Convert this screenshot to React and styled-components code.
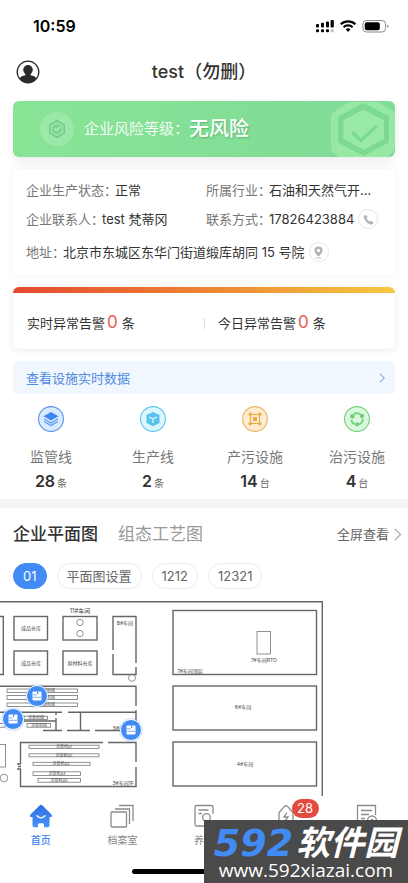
import React from 'react'
import styled, { createGlobalStyle } from 'styled-components'

const stats = [
  { name: '监管线', count: 28, unit: '条', icon: 'layers', color: '#5b8fe8', fill: '#d9ecff' },
  { name: '生产线', count: 2, unit: '条', icon: 'cube', color: '#5cc4ea', fill: '#dcf6ff' },
  { name: '产污设施', count: 14, unit: '台', icon: 'nodes', color: '#e9b45c', fill: '#fdecd0' },
  { name: '治污设施', count: 4, unit: '台', icon: 'cycle', color: '#6fcf77', fill: '#dbf8dc' }
]

const plans = ['01', '平面图设置', '1212', '12321']

const devices = [
  { id: 'a', x: 37, y: 95 },
  { id: 'b', x: 13, y: 118 },
  { id: 'c', x: 131, y: 129 }
]

const App = () => {
  return (
    <Page>
      <GlobalStyle />
      <StatusBar>
        <Clock>10:59</Clock>
        <StatusIcons />
      </StatusBar>

      <Header>
        <IconButton aria-label='我的'>
          <UserIcon />
        </IconButton>
        <Title>test（勿删）</Title>
      </Header>

      <Content>
        <Banner>
          <BannerBadge><ShieldSmall /></BannerBadge>
          <BannerLabel>企业风险等级：</BannerLabel>
          <BannerValue>无风险</BannerValue>
          <BannerArt><ShieldLarge /></BannerArt>
        </Banner>

        <InfoCard>
          <InfoItem><dt>企业生产状态：</dt><dd>正常</dd></InfoItem>
          <InfoItem><dt>所属行业：</dt><dd>石油和天然气开…</dd></InfoItem>
          <InfoItem><dt>企业联系人：</dt><dd>test 梵蒂冈</dd></InfoItem>
          <InfoItem>
            <dt>联系方式：</dt><dd>17826423884</dd>
            <RoundButton aria-label='拨打电话'><PhoneIcon /></RoundButton>
          </InfoItem>
          <InfoItem $wide>
            <dt>地址：</dt><dd>北京市东城区东华门街道缎库胡同 15 号院</dd>
            <RoundButton aria-label='查看位置'><PlaceIcon /></RoundButton>
          </InfoItem>
        </InfoCard>

        <AlertCard>
          <AlertItem>实时异常告警<b>0</b>条</AlertItem>
          <AlertItem>今日异常告警<b>0</b>条</AlertItem>
        </AlertCard>

        <DataLink href='#data'>
          查看设施实时数据
          <Chevron size={10} />
        </DataLink>
      </Content>

      <Stats>
        {stats.map(s => (
          <Stat key={s.name}>
            <StatIcon type={s.icon} color={s.color} fill={s.fill} />
            <StatName>{s.name}</StatName>
            <StatCount>{s.count}<small>{s.unit}</small></StatCount>
          </Stat>
        ))}
      </Stats>

      <PlanHead>
        <PlanTab $active>企业平面图</PlanTab>
        <PlanTab>组态工艺图</PlanTab>
        <FullLink href='#full'>全屏查看<Chevron size={13} /></FullLink>
      </PlanHead>
      <Chips>
        {plans.map((p, i) => <Chip key={p} $active={i === 0}>{p}</Chip>)}
      </Chips>
      <PlanCanvas>
        <FloorPlan />
        {devices.map(d => (
          <DevicePin key={d.id} aria-label='设备' style={{ left: d.x, top: d.y }}>
            <DeviceIcon />
          </DevicePin>
        ))}
      </PlanCanvas>

      <NavBar>
        <NavItem $active><HomeIcon />首页</NavItem>
        <NavItem><ArchiveIcon />档案室</NavItem>
        <NavItem><SearchDocIcon />养护</NavItem>
        <NavItem aria-label='告警'>
          <BoltIcon />
          <NavBadge>28</NavBadge>
        </NavItem>
        <NavItem aria-label='记录'><RecordIcon /></NavItem>
      </NavBar>
      <HomeIndicator />

      <Watermark>
        <WatermarkName><b>592</b>软件园</WatermarkName>
        <WatermarkUrl>www.592xiazai.com</WatermarkUrl>
      </Watermark>
    </Page>
  )
}

export default App

/* icons */

const StatusIcons = () => (
  <svg width='74' height='16' viewBox='0 0 74 16'>
    <g fill='#000'>
      <rect x='1' y='6' width='3' height='3.6' rx='1' />
      <rect x='6' y='4.8' width='3' height='4.8' rx='1' />
      <rect x='11' y='3.4' width='3' height='6.2' rx='1' />
      <rect x='15.6' y='2' width='3.2' height='7.6' rx='1' />
      <rect x='1' y='11.2' width='3' height='3' rx='1' />
      <rect x='6' y='11.2' width='3' height='3' rx='1' />
      <rect x='11' y='11.2' width='3' height='3' rx='1' />
      <rect x='15.8' y='11.2' width='3' height='3' rx='1' opacity='.25' />
    </g>
    <g fill='none' stroke='#000' strokeWidth='2.2'>
      <path d='M25.8 6.2a10.6 10.6 0 0 1 14.6 0' />
      <path d='M28.6 9.2a6.6 6.6 0 0 1 9 0' />
    </g>
    <path d='M30.7 11.3a3.6 3.6 0 0 1 4.8 0l-2.4 2.7z' />
    <rect x='48' y='2.5' width='22.5' height='11.5' rx='3.4' fill='none' stroke='#8b8b8b' />
    <rect x='49.8' y='4.3' width='15' height='8' rx='2' />
    <path d='M72 6.5v3.6q1.6-.6 1.6-1.8t-1.6-1.8z' fill='#999' />
  </svg>
)

const UserIcon = () => (
  <svg width='24' height='24' viewBox='0 0 24 24'>
    <circle cx='12' cy='12' r='10.8' fill='#fff' stroke='#2b2b2b' strokeWidth='1.3' />
    <circle cx='12' cy='9.8' r='4.8' fill='#2b2b2b' />
    <path d='M9.4 13h5.200v2.200q4.600.600 5.600 3.300-3 4.300-8.200 4.300t-8.200-4.300q1-2.700 5.600-3.300z' fill='#2b2b2b' />
  </svg>
)

const ShieldSmall = () => (
  <svg width='20' height='20' viewBox='0 0 20 20'>
    <path d='M10 1.8l7.2 4.1v8.2L10 18.2l-7.2-4.1V5.9z' fill='none' stroke='#6fcb87' strokeWidth='1.6' strokeLinejoin='round' />
    <path d='M10 4.6l4.8 2.7v5.4L10 15.4l-4.8-2.7V7.3z' fill='#79d590' />
    <path d='M7.4 9.6l2 2 3.6-3.5' fill='none' stroke='#b4f0bb' strokeWidth='1.4' />
  </svg>
)

const ShieldLarge = () => (
  <svg width='64' height='56' viewBox='0 0 64 56'>
    <path d='M18 1h28l16 9 4 4v31l-4 6-6 5H8l-4-3q-4-2-4-6V16q0-4 4-6z' fill='#96e8a2' />
    <path d='M32.500 2L58 15.500v26L32.500 55 7 41.500v-26z' fill='#7cd990' />
    <path d='M32.500 8.500L53 19.200v18.600L32.500 49 12.500 37.800V19.200z' fill='#98eaa4' />
    <path d='M21.500 31.500l8.500 8L45.500 25' fill='none' stroke='#7cd990' strokeWidth='3.200' />
  </svg>
)

const PhoneIcon = () => (
  <svg width='11' height='11' viewBox='0 0 24 24' fill='#b3b3b3'>
    <path d='M6 1.500L2 4.500Q.500 7 4.500 13.500T15 22.500q4 1.500 6-.500l2-3-5.500-4.500-3.500 2Q10.500 15 8 10l2-3.500z' />
  </svg>
)

const PlaceIcon = () => (
  <svg width='11' height='13' viewBox='0 0 22 26'>
    <path d='M11 1a8 8 0 0 1 8 8q0 5-8 12Q3 14 3 9a8 8 0 0 1 8-8z' fill='#b3b3b3' />
    <circle cx='11' cy='9' r='3.400' fill='#fff' />
    <path d='M5 24h12' stroke='#b3b3b3' strokeWidth='1.500' />
  </svg>
)

const Chevron = ({ size }) => (
  <svg width={size} height={size} viewBox='0 0 12 12' fill='none' stroke='currentColor' strokeWidth='1.2'>
    <path d='M3.500 .8L8.800 6l-5.300 5.200' />
  </svg>
)

const glyphs = {
  layers: (
    <g>
      <path d='M13 6l7.500 4.200-7.500 4.300-7.500-4.300z' fill='#3f86f0' />
      <path d='M6 13l7 4 7-4M6 15.600l7 4 7-4' fill='none' stroke='#5b97f2' strokeWidth='1.200' />
    </g>
  ),
  cube: (
    <g>
      <path d='M13 6l6.500 3v8L13 20.200 6.500 17V9z' fill='#56c2ee' />
      <path d='M9 11l4 1.800 4-1.800M13 12.800V17' fill='none' stroke='#dcf6ff' strokeWidth='1.300' />
    </g>
  ),
  nodes: (
    <g fill='#e9ae4c'>
      <rect x='8.500' y='8.500' width='9' height='9' fill='none' stroke='#e9ae4c' strokeWidth='1.200' />
      <rect x='11' y='11' width='4' height='4' />
      <circle cx='8.200' cy='8.200' r='1.700' />
      <circle cx='17.800' cy='8.200' r='1.700' />
      <circle cx='8.200' cy='17.800' r='1.700' />
      <circle cx='17.800' cy='17.800' r='1.700' />
    </g>
  ),
  cycle: (
    <g fill='none' stroke='#6bd176' strokeWidth='1.700'>
      <path d='M9.800 8.300a5.700 5.700 0 0 1 6.800.400M18.700 12.500a5.700 5.700 0 0 1-3.700 5.800M10.800 18.300a5.700 5.700 0 0 1-3.400-4.500' />
      <circle cx='8.400' cy='10.300' r='1.500' fill='#6bd176' />
      <circle cx='18' cy='10' r='1.300' fill='#6bd176' />
      <circle cx='13.200' cy='18.400' r='1.200' fill='#6bd176' />
    </g>
  )
}

const StatIcon = ({ type, color, fill }) => (
  <svg width='26' height='26' viewBox='0 0 26 26'>
    <circle cx='13' cy='13' r='12.400' fill={fill} stroke={color} strokeWidth='1.100' />
    {glyphs[type]}
  </svg>
)

const DeviceIcon = () => (
  <svg width='10' height='10' viewBox='0 0 10 10'>
    <rect x='.5' y='.5' width='9' height='9' rx='.800' fill='#fff' />
    <path d='M1 3.800h3.500M1 6.300h8' stroke='#4a8df0' strokeWidth='.700' />
    <path d='M5 .5h1.200v2.500H5z' fill='#4a8df0' />
  </svg>
)

const HomeIcon = () => (
  <svg width='24' height='24' viewBox='0 0 24 24'>
    <defs>
      <linearGradient id='home' x1='0' y1='0' x2='0' y2='1'>
        <stop offset='0' stopColor='#2f6fe0' />
        <stop offset='1' stopColor='#4a92f8' />
      </linearGradient>
    </defs>
    <path d='M10.800 1.200q1.200-1 2.400 0l9.600 9.600q1.200 1.700-.600 2.200h-1.700v8.500q0 1.800-1.800 1.800H15v-2.600q0-1.500-1.400-1.500h-3.200Q9 19.200 9 20.700v2.600H5.300q-1.800 0-1.800-1.800V13H1.800q-1.800-.500-.600-2.200z' fill='url(#home)' />
    <path d='M8 11.700q4 4.400 8 0' fill='none' stroke='#fff' strokeWidth='1.300' strokeLinecap='round' />
  </svg>
)

const LineIcon = styled.svg.attrs({ width: 24, height: 24, viewBox: '0 0 24 24' })`
  fill: none;
  stroke: #8c8c8c;
  stroke-width: 1.3;
`

const ArchiveIcon = () => (
  <LineIcon>
    <rect x='1' y='8' width='15.500' height='15' rx='1' />
    <path d='M5 5h14.500v15M9 1.500h14V17' />
  </LineIcon>
)

const SearchDocIcon = () => (
  <LineIcon>
    <path d='M21 10V3q0-1.500-1.500-1.500h-15Q3 1.500 3 3v17.500Q3 22 4.500 22H12M6.500 6h10M6.500 9.500H10' />
    <circle cx='14.500' cy='13.500' r='3.800' />
    <path d='M17.500 16.500l4 4.500' />
  </LineIcon>
)

const BoltIcon = () => (
  <LineIcon>
    <path d='M9 4q3-4.500 6 0l3.500 4q.5.500.5 1.500V22H5V9.500q0-1 .5-1.500z' />
    <path d='M13 8.500L10 13h4l-3 4' />
  </LineIcon>
)

const RecordIcon = () => (
  <LineIcon>
    <path d='M20.500 11V1.500h-18V22H13M6 6.500h11M6 10.500h8M6 14.500h4' />
    <circle cx='17' cy='16.500' r='4.500' />
    <circle cx='17' cy='16.500' r='1' />
  </LineIcon>
)

/* the site drawing, one unit per pixel */

const rooms = [
  [14, 15.5, 33.5, 23.500], [63, 15.5, 34, 23.500],
  [14, 50, 33.5, 23.500], [63, 50, 34, 23.500],
  [173, 9.5, 143.5, 64], [173, 85, 143.5, 44], [173, 141, 143.5, 44]
]

const racks = [
  [7, 88, 70.5, 3.5], [7, 94.500, 70.5, 4], [7, 102, 70.5, 3.5],
  [24, 115.200, 23.500, 3.300], [27, 122.500, 23.500, 3.700], [-2, 122.500, 7, 3.700],
  [29, 144.200, 70, 3.200], [29, 152.800, 70, 3], [33, 161.300, 57, 3],
  [33, 170.800, 47.5, 3.700], [38, 177.500, 42.500, 3.700],
  [257, 30.500, 13.500, 22.500], [-2, 143.500, 7.500, 22.500]
]

const labels = [
  [31, 29, '成品仓库', 5], [80, 12, '11#车间', 6], [125, 24, '8#车间', 5],
  [31, 64, '成品仓库', 5], [80, 64, '原材料仓库', 5],
  [190, 72, '7#车间顶层', 5], [264, 61, '7#车间RTO', 5],
  [243, 108, '6#车间', 5], [245, 165, '4#车间', 5],
  [121, 129, '5#车间', 5], [123, 184, '3#车间1F', 5],
  [47, 91, '涂装机组', 4], [47, 98, '涂装机组', 4], [47, 105, '涂装机组', 4],
  [36, 118, '涂装机组', 4], [39, 126, '涂装机组', 4],
  [64, 147, '涂装机01', 4], [64, 156, '涂装机02', 4], [61, 164, '涂装机03', 4],
  [57, 174, '涂装机04', 4], [59, 181, '涂装机05', 4]
]

const FloorPlan = () => (
  <PlanSvg width='408' height='195' viewBox='0 0 408 195'>
    <g className='wall'>
      <path d='M0 .8H322.300V195' />
      <path d='M0 15.5H3.300V73.500H0' />
      {rooms.map(([x, y, w, h]) => <rect key={x + '-' + y} x={x} y={y} width={w} height={h} />)}
      <path d='M113 49V15.500h23V62M136 66v7.500h-23V53' />
      <path d='M0 85.200H136V105M136 109v20.500H95M90 129.500H67M62 129.500H43M0 111.200H62M68 111.200h68M80.500 111v18.500M56 111v3M56 117v12.500M24 120h32' />
      <path d='M103 141.500H20.500V163M20.500 168v17.500H136V166M136 161v-19.500h-28' />
      <path d='M17 163h4M17 168h4M18 165.500h3' />
    </g>
    <g className='rack'>
      {racks.map(([x, y, w, h]) => <rect key={x + '-' + y} x={x} y={y} width={w} height={h} />)}
      <circle cx='80' cy='21.500' r='3.200' />
      <circle cx='80' cy='32.500' r='3.200' />
      <circle cx='132' cy='76.800' r='3.500' />
      <circle cx='4' cy='177' r='3.800' />
    </g>
    {labels.map(([x, y, t, s]) => <text key={x + '-' + y} x={x} y={y} fontSize={s}>{t}</text>)}
  </PlanSvg>
)

const PlanSvg = styled.svg`
  display: block;

  .wall {
    fill: none;
    stroke: #666;
    stroke-width: 1.4;
  }
  .rack {
    fill: none;
    stroke: #777;
    stroke-width: 0.8;
  }
  text {
    fill: #444;
    text-anchor: middle;
  }
`

const GlobalStyle = createGlobalStyle`
  * {
    box-sizing: border-box;
  }
  body {
    margin: 0;
    background: #fff;
    color: #333;
    font-family: Inter, 'Noto Sans CJK SC', sans-serif;
    font-size: 13px;
    line-height: 20px;
  }
  button {
    padding: 0;
    border: 0;
    background: none;
    color: inherit;
    font: inherit;
  }
  a {
    text-decoration: none;
  }
  svg {
    flex-shrink: 0;
  }
`

const Page = styled.div`
  position: relative;
  min-height: 100vh;
  overflow: hidden;
`

const StatusBar = styled.div`
  display: flex;
  align-items: center;
  justify-content: space-between;
  height: 52px;
  padding: 0 19px 0 33px;
`

const Clock = styled.span`
  color: #000;
  font-size: 16px;
  font-weight: 600;
`

const Header = styled.header`
  display: grid;
  grid-template-columns: 24px 1fr 24px;
  align-items: center;
  height: 40px;
  padding: 0 16px;
`

const IconButton = styled.button`
  display: flex;
`

const Title = styled.h1`
  margin: 0;
  font-size: 18px;
  font-weight: 500;
  line-height: 24px;
  text-align: center;
`

const Content = styled.main`
  display: flex;
  flex-direction: column;
  gap: 12px;
  padding: 9px 13px 0;
`

const Banner = styled.section`
  position: relative;
  display: flex;
  align-items: center;
  height: 56px;
  padding-left: 27px;
  overflow: hidden;
  border-radius: 6px;
  background: linear-gradient(90deg, #88e495, #7fdb97);
  box-shadow: 0 4px 10px rgba(0, 0, 0, 0.08);
  color: #fff;
`

const BannerBadge = styled.span`
  display: flex;
  align-items: center;
  justify-content: center;
  width: 34px;
  height: 34px;
  margin-right: 10px;
  border-radius: 50%;
  background: rgba(255, 255, 255, 0.18);
`

const BannerLabel = styled.span`
  font-size: 15px;
  opacity: 0.9;
`

const BannerValue = styled.strong`
  z-index: 1;
  font-size: 20px;
  font-weight: 500;
  text-shadow: 1px 1px 2px rgba(0, 80, 30, 0.3);
`

const BannerArt = styled.span`
  display: flex;
  margin-left: auto;
`

const InfoCard = styled.dl`
  display: grid;
  grid-template-columns: 180px 1fr;
  row-gap: 7px;
  margin: 0;
  padding: 10px 13px 12px;
  border-radius: 4px;
  box-shadow: 0 0 10px rgba(0, 0, 0, 0.06);
`

const InfoItem = styled.div`
  display: flex;
  align-items: center;
  grid-column: ${p => p.$wide ? '1 / -1' : 'auto'};
  min-width: 0;
  height: 22px;
  margin-top: ${p => p.$wide ? '4px' : '0'};

  dt {
    flex-shrink: 0;
    margin-right: -2px;
    color: #777;
  }
  dd {
    margin: 0;
    white-space: nowrap;
  }
`

const RoundButton = styled.button`
  display: flex;
  flex-shrink: 0;
  align-items: center;
  justify-content: center;
  width: 20px;
  height: 20px;
  margin-left: 4px;
  border: 1px solid #e8e8e8;
  border-radius: 50%;
`

const AlertCard = styled.section`
  display: grid;
  grid-template-columns: 1fr 1fr;
  align-items: center;
  height: 62px;
  border-radius: 6px;
  background: linear-gradient(90deg, #e4492f, #ee8433 50%, #f5c842) top / 100% 6px no-repeat;
  box-shadow: 0 2px 10px rgba(0, 0, 0, 0.07);
`

const AlertItem = styled.div`
  padding: 8px 0 0 14px;

  & + & {
    background: linear-gradient(#ddd, #ddd) left 14px / 1px 11px no-repeat;
  }
  b {
    margin: 0 4px 0 2px;
    color: #e85a5a;
    font-size: 17px;
    font-weight: 400;
  }
`

const DataLink = styled.a`
  display: flex;
  align-items: center;
  justify-content: space-between;
  height: 33px;
  padding: 0 8px 0 13px;
  border-radius: 4px;
  background: #f1f7fe;
  color: #4f8be0;
`

const Stats = styled.section`
  display: grid;
  grid-template-columns: repeat(4, 1fr);
  padding: 12px 0 4px;
  border-bottom: 9px solid #f4f4f4;
`

const Stat = styled.div`
  display: flex;
  flex-direction: column;
  align-items: center;
`

const StatName = styled.span`
  margin-top: 13px;
  color: #777;
  font-size: 14px;
  line-height: 24px;
`

const StatCount = styled.span`
  font-size: 16px;
  font-weight: 600;
  line-height: 24px;

  small {
    margin-left: 2px;
    color: #666;
    font-size: 10px;
    font-weight: 400;
  }
`

const PlanHead = styled.div`
  display: flex;
  align-items: center;
  gap: 20px;
  height: 52px;
  padding: 0 4px 0 13px;
`

const PlanTab = styled.button`
  color: ${p => p.$active ? '#333' : '#999'};
  font-size: 17px;
  font-weight: ${p => p.$active ? 500 : 400};
`

const FullLink = styled.a`
  display: flex;
  align-items: center;
  gap: 2px;
  margin-left: auto;
  color: #666;

  svg {
    color: #aaa;
  }
`

const Chips = styled.div`
  display: flex;
  gap: 10px;
  padding: 3px 13px 12px;
`

const Chip = styled.button`
  height: 26px;
  padding: 0 9px;
  border: 1px solid ${p => p.$active ? '#428bf5' : '#ececec'};
  border-radius: 13px;
  background: ${p => p.$active ? '#428bf5' : '#fff'};
  color: ${p => p.$active ? '#fff' : '#666'};
`

const PlanCanvas = styled.section`
  position: relative;
  overflow: hidden;
`

const DevicePin = styled.button`
  position: absolute;
  display: flex;
  align-items: center;
  justify-content: center;
  width: 22px;
  height: 22px;
  margin: -11px 0 0 -11px;
  border: 1px solid #fff;
  border-radius: 50%;
  background: #428bf5;
  box-shadow: 0 0 2px rgba(66, 139, 245, 0.6);
`

const NavBar = styled.nav`
  display: grid;
  grid-template-columns: repeat(5, 1fr);
  height: 73px;
  padding-top: 8px;
  background: #fff;
`

const NavItem = styled.button`
  position: relative;
  display: flex;
  flex-direction: column;
  align-items: center;
  gap: 2px;
  color: ${p => p.$active ? '#3b82f0' : '#888'};
  font-size: 10px;
  font-weight: ${p => p.$active ? 500 : 400};
`

const NavBadge = styled.span`
  position: absolute;
  top: -5px;
  left: 50%;
  width: 27px;
  margin-left: 6px;
  border-radius: 10px;
  background: #e24b40;
  color: #fff;
  font-size: 13px;
  line-height: 19px;
`

const HomeIndicator = styled.div`
  width: 144px;
  height: 5px;
  margin: 0 auto 9px;
  border-radius: 3px;
  background: #000;
`

const Watermark = styled.footer`
  position: absolute;
  right: 0;
  bottom: 0;
  width: 204px;
  height: 63px;
  padding-top: 6px;
  background: #4a4a4a;
  color: #fff;
  text-align: center;
  white-space: nowrap;
`

const WatermarkName = styled.div`
  display: flex;
  align-items: center;
  justify-content: center;
  gap: 3px;
  height: 34px;
  font-size: 34px;
  font-style: italic;
  font-weight: 700;
  line-height: 34px;

  b {
    color: #428bf5;
    font-family: 'DejaVu Sans', sans-serif;
    font-size: 38px;
  }
`

const WatermarkUrl = styled.div`
  font-family: 'Open Sans', 'Noto Sans', sans-serif;
  font-size: 19px;
  font-weight: 500;
  line-height: 20px;
`
